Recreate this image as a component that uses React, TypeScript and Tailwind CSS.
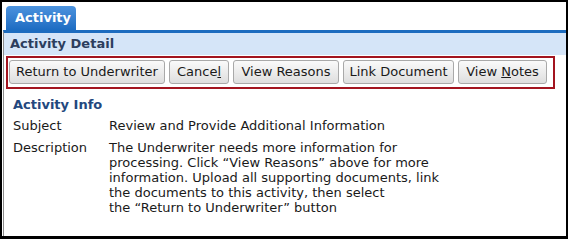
export default function App() {
  const buttons = [
    { label: 'Return to Underwriter', w: 'w-[156px]' },
    { label: 'Cancel', w: 'w-[60px]', underline: 5 },
    { label: 'View Reasons', w: 'w-[106px]' },
    { label: 'Link Document', w: 'w-[111px]' },
    { label: 'View Notes', w: 'w-[89px]', underline: 5 },
  ];

  return (
    <div
      className="w-[568px] h-[239px] bg-white border-t-2 border-x-2 border-b-[3px] border-black flex flex-col text-[13px] text-[#1a1a1a]"
      style={{ fontFamily: 'Verdana, "DejaVu Sans", sans-serif' }}
    >
      {/* Tab strip */}
      <div className="flex pl-[4px] pt-[4px]">
        <div className="h-[24px] w-[70px] rounded-t-[4px] bg-gradient-to-b from-[#4c93de] to-[#1c6cc2] text-white font-bold flex items-center pl-[9px]">
          Activity
        </div>
      </div>

      {/* Panel */}
      <div className="flex-1 ml-[1px] border-l border-l-[#8c8c8c] border-t-[3px] border-t-[#1d6cbf]">
        <div className="h-[22px] bg-[#d5e5f8] pl-[6px] flex items-center font-bold text-[#2c3e5e]">
          Activity Detail
        </div>

        <div className="ml-[2px] mt-[1px] w-[549px] h-[33px] border-2 border-[#a3141f] flex items-start gap-[4px] pl-[1px] pt-[2px]">
          {buttons.map((b) => (
            <div
              key={b.label}
              className={`${b.w} h-[24px] rounded-[3px] border border-[#a9a9a9] bg-gradient-to-b from-[#fafafa] to-[#dedede] flex items-center justify-center text-[#1a1a1a]`}
            >
              {b.underline !== undefined ? (
                <span>
                  {b.label === 'Cancel' ? (
                    <>
                      Cance<span className="underline">l</span>
                    </>
                  ) : (
                    <>
                      View <span className="underline">N</span>otes
                    </>
                  )}
                </span>
              ) : (
                b.label
              )}
            </div>
          ))}
        </div>

        {/* Activity Info */}
        <div className="pl-[9px] pt-[7px]">
          <div className="font-bold text-[#23487e] leading-[17px]">Activity Info</div>
          <div className="grid grid-cols-[96px_1fr] mt-[5px] gap-y-[6px] leading-[16px]">
            <div>Subject</div>
            <div>Review and Provide Additional Information</div>
            <div>Description</div>
            <div className="leading-[15px]">
              The Underwriter needs more information for
              <br />
              processing. Click “View Reasons” above for more
              <br />
              information. Upload all supporting documents, link
              <br />
              the documents to this activity, then select
              <br />
              the “Return to Underwriter” button
            </div>
          </div>
        </div>
      </div>
    </div>
  );
}
